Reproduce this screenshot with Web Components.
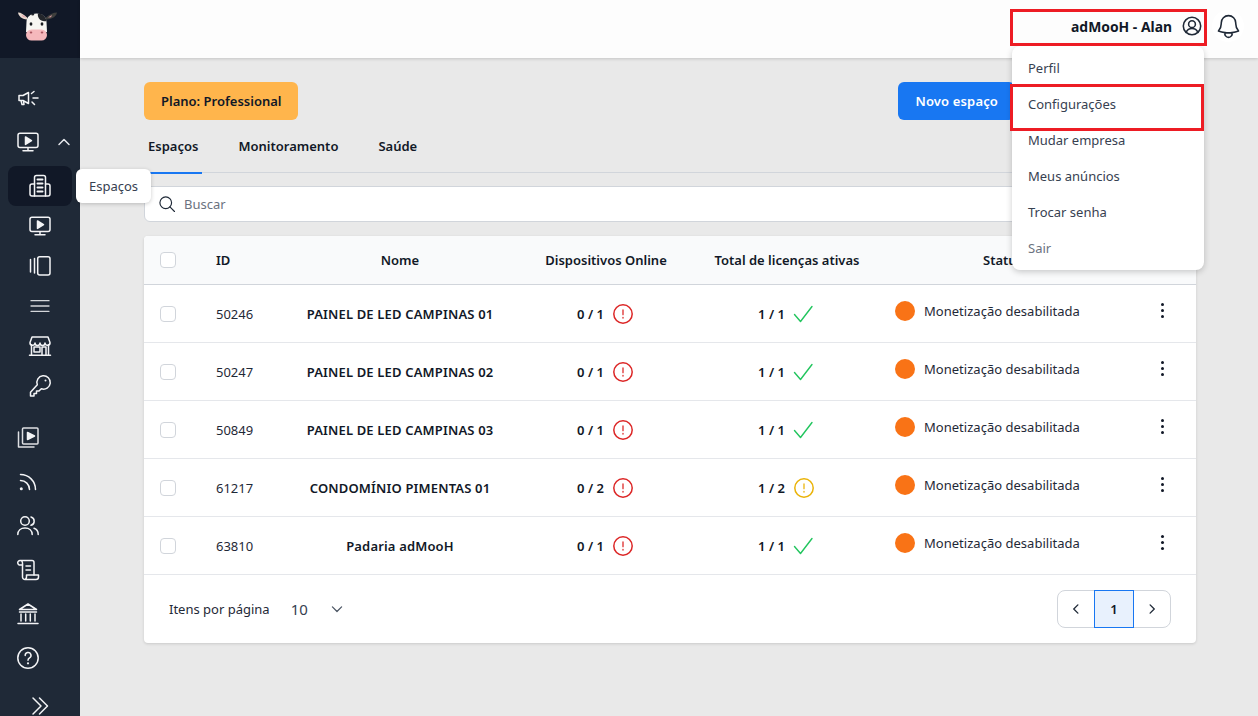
<!DOCTYPE html>
<html lang="pt-BR">
<head>
	<meta charset="UTF-8">
	<title>Espaços</title>
	<style>
		html, body {
			margin: 0;
			height: 100%;
		}
		body {
			width: 1258px;
			height: 716px;
			overflow: hidden;
			position: relative;
			display: grid;
			grid-template-columns: 80px 1fr;
			grid-template-rows: 58px 1fr;
			background: #e9e9e9;
			color: #111827;
			font-family: "Noto Sans", "Open Sans", sans-serif;
		}
		side-bar { grid-row: 1 / 3; }
	</style>
</head>
<body>
	<side-bar>
		<nav-item icon="megaphone"></nav-item>
		<nav-item icon="monitor" expanded gap="4"></nav-item>
		<nav-item icon="building" sub active gap="4"></nav-item>
		<nav-item icon="monitor" sub></nav-item>
		<nav-item icon="carousel" sub></nav-item>
		<nav-item icon="lines" sub></nav-item>
		<nav-item icon="store" sub></nav-item>
		<nav-item icon="key" sub></nav-item>
		<nav-item icon="library" gap="11"></nav-item>
		<nav-item icon="rss" gap="5"></nav-item>
		<nav-item icon="users" gap="4"></nav-item>
		<nav-item icon="scroll" gap="4"></nav-item>
		<nav-item icon="bank" gap="4"></nav-item>
		<nav-item icon="help" gap="4"></nav-item>
		<nav-item icon="collapse" sub gap="8"></nav-item>
	</side-bar>

	<top-bar>adMooH - Alan</top-bar>

	<page-content>
		<tool-bar>
			<app-button slot="left" kind="plan">Plano: Professional</app-button>
			<app-button slot="right" kind="primary">Novo espaço</app-button>
		</tool-bar>
		<tab-bar>
			<tab-item active>Espaços</tab-item>
			<tab-item>Monitoramento</tab-item>
			<tab-item>Saúde</tab-item>
		</tab-bar>
		<search-box>Buscar</search-box>
		<spaces-table>
			<space-row uid="50246" name="PAINEL DE LED CAMPINAS 01" online="0 / 1" licenses="1 / 1" state="ok"></space-row>
			<space-row uid="50247" name="PAINEL DE LED CAMPINAS 02" online="0 / 1" licenses="1 / 1" state="ok"></space-row>
			<space-row uid="50849" name="PAINEL DE LED CAMPINAS 03" online="0 / 1" licenses="1 / 1" state="ok"></space-row>
			<space-row uid="61217" name="CONDOMÍNIO PIMENTAS 01" online="0 / 2" licenses="1 / 2" state="warn"></space-row>
			<space-row uid="63810" name="Padaria adMooH" online="0 / 1" licenses="1 / 1" state="ok"></space-row>
		</spaces-table>
	</page-content>

	<nav-tooltip>Espaços</nav-tooltip>

	<user-menu>
		<menu-entry>Perfil</menu-entry>
		<menu-entry>Configurações</menu-entry>
		<menu-entry>Mudar empresa</menu-entry>
		<menu-entry>Meus anúncios</menu-entry>
		<menu-entry>Trocar senha</menu-entry>
		<menu-entry muted>Sair</menu-entry>
	</user-menu>

	<!-- Recuadros rojos de la captura, van encima de todo -->
	<mark-box style="left:1010px;top:9px;width:197px;height:37px"></mark-box>
	<mark-box style="left:1010px;top:84px;width:194px;height:47px"></mark-box>

	<script>
		// Todos los iconos comparten viewBox de 24x24
		const ICONS = {
			megaphone: '<path d="M3 9.5h4l5.5-3v11L7 14.5H3zM5 14.5l1 4h2l-.5-3.6"/><path d="M15.5 7.5l2.5-2M17 12h5M16 16l2.5 2.5"/>',
			monitor: '<rect x="2" y="3.2" width="20" height="14.3" rx="2"/><path d="M9.5 7l6 3.7-6 3.7z" fill="currentColor"/><path d="M12 18v2.7M7 20.8h10"/>',
			building: '<path d="M6.5 22V3.5a2 2 0 0 1 2-2h7a2 2 0 0 1 2 2V22"/><path d="M6.5 10H4a2 2 0 0 0-2 2v8a2 2 0 0 0 2 2h16a2 2 0 0 0 2-2v-8a2 2 0 0 0-2-2h-2.5"/><path d="M9.5 5.5h5M9.5 9.5h5M9.5 13.5h5M9.5 17.5h5" stroke-width="2"/>',
			carousel: '<rect x="9.7" y="2.7" width="12.3" height="18.3" rx="2"/><path d="M2.5 5.5V18M6.5 4.5V19"/>',
			lines: '<path d="M3 6.7h18M3 12h18M3 17.3h18" stroke-width="1.3" opacity=".85"/>',
			store: '<path d="M4 3h16l2 5.5a2.5 2.5 0 0 1-5 .5 2.5 2.5 0 0 1-5 0 2.5 2.5 0 0 1-5 0 2.5 2.5 0 0 1-5-.5z"/><path d="M3.5 11v10M20.5 11v10M1.5 21.2h21"/><rect x="6" y="13" width="6" height="5"/><path d="M14 21v-8h4v8"/>',
			key: '<path d="M9.3 10.7A6.7 6.7 0 1 1 13.3 14.7L11 17H8.5v2.5H6V22H2.5v-3.7z"/><path d="M17.5 6.5h.01" stroke-width="2"/>',
			library: '<rect x="6.5" y="3" width="15.5" height="16" rx="1" opacity=".9"/><path d="M11.5 7.5l7 3.5-7 3.5z" fill="currentColor"/><path d="M2.5 7v15H18" opacity=".9"/>',
			rss: '<path d="M4.5 4.5a15 15 0 0 1 15 15M4.5 10.5a9 9 0 0 1 9 9"/><circle cx="5.3" cy="18.7" r="1.5" fill="currentColor" stroke="none"/>',
			users: '<circle cx="9" cy="7" r="4.3"/><path d="M1.8 20.5c0-4 3-6.5 7.2-6.5s7.2 2.5 7.2 6.5M15 3a4.3 4.3 0 0 1 0 8.3M18 14.2c2.6.8 4.2 3 4.2 6.3"/>',
			scroll: '<path d="M18 17V4.5a2 2 0 0 0-2-2H4a2.3 2.3 0 0 0-2.3 2.3c0 1 .6 1.7 1.3 2.2h3.5"/><path d="M5.2 2.7c.8.4 1.3 1.2 1.3 2.2V19A2.5 2.5 0 0 0 9 21.5h11a2.5 2.5 0 0 0 2.5-2.5v-2H10.5v2A2.5 2.5 0 0 1 9 21.4"/><path d="M10 8h4.5M10 12h4.5"/>',
			bank: '<path d="M12 2L3.5 7.5h17z"/><path d="M3.5 10h17M5 12v7M9.7 12v7M14.3 12v7M19 12v7M2 21.5h20"/>',
			help: '<circle cx="12" cy="12" r="10.2"/><path d="M9.2 9.5a2.9 2.9 0 1 1 4.4 2.4c-1 .6-1.6 1.1-1.6 2.3"/><circle cx="12" cy="17.3" r="1.1" fill="currentColor" stroke="none"/>',
			collapse: '<path d="M5 4l8 8-8 8M11.5 4l8 8-8 8"/>',
			up: '<path d="M7 14.5l5-5 5 5"/>',
			down: '<path d="M6.5 9.5L12 15l5.5-5.5"/>',
			left: '<path d="M14.5 6.5L9 12l5.5 5.5"/>',
			right: '<path d="M9.5 6.5L15 12l-5.5 5.5"/>',
			search: '<circle cx="10.5" cy="10.5" r="7"/><path d="M15.5 15.5L21 21"/>',
			user: '<circle cx="12" cy="12" r="9.5"/><circle cx="12" cy="10" r="3.7"/><path d="M5.5 19c1.2-2.7 3.5-4.2 6.5-4.2s5.3 1.5 6.5 4.2"/>',
			bell: '<path d="M14.857 17.082a23.848 23.848 0 0 0 5.454-1.31A8.967 8.967 0 0 1 18 9.75V9A6 6 0 0 0 6 9v.75a8.967 8.967 0 0 1-2.312 6.022c1.733.64 3.56 1.085 5.455 1.31m5.714 0a24.255 24.255 0 0 1-5.714 0m5.714 0a3 3 0 1 1-5.714 0"/>',
			alert: '<circle cx="12" cy="12" r="9.2"/><path d="M12 8v4.500" stroke-width="1.7" opacity=".75"/><circle cx="12" cy="15.800" r=".95" fill="currentColor" stroke="none" opacity=".75"/>',
			check: '<path d="M2.5 12.5l6 7L20 4.5"/>'
		};

		function icon(name, size, width) {
			return `<svg width="${size}" height="${size}" viewBox="0 0 24 24" fill="none" stroke="currentColor" stroke-width="${width || 1.5}" stroke-linecap="round" stroke-linejoin="round" aria-hidden="true">${ICONS[name]}</svg>`;
		}

		// Clase base: cada componente solo declara su HTML y sus estilos
		class Base extends HTMLElement {
			constructor() {
				super();
				this.attachShadow({mode: 'open'});
			}
			connectedCallback() {
				this.shadowRoot.innerHTML = this.render();
			}
		}

		class SideBar extends Base {
			render() {
				return `<style>
					:host { display: flex; flex-direction: column; height: 716px; overflow: hidden; background: #1f2937; }
					.logo { height: 58px; flex: none; display: flex; align-items: center; justify-content: center; padding: 0 6px 6px 0; box-sizing: border-box; background: #111827; }
					nav { display: flex; flex-direction: column; padding: 20px 8px 0; }
				</style>
				<div class="logo">
					<svg width="42" height="32" viewBox="0 0 42 32">
						<path d="M11 7.5C8 4.500 5 2.500 2 2.500c.5 3.500 3.500 6.500 9 7z" fill="#e9d9cf"/><path d="M5.500 4.500l5 3-3.500-.5z" fill="#e9a3ab"/>
						<path d="M30 7.5c3-3 7-5 11-5-.5 3.500-4 6.500-11 7z" fill="#3f3f3d"/><path d="M36 5l-4 2.500 3-.3z" fill="#d99aa1"/>
						<path d="M10.500 12c0-5 4-8.500 10-8.500s10 3.500 10 8.500l.5 10H10z" fill="#f7f6f2"/>
						<path d="M22 3.600c4.500.2 7.800 3 8.500 7.400-3 .6-6-.2-7.500-2.500-1-1.500-1.500-3.200-1-4.900zM14.500 4.800c1-.6 2.500-1 3.800-1.100-.1 1.500-1.200 2.500-3.800 1.100z" fill="#23262b"/>
						<ellipse cx="15" cy="14" rx="1.400" ry="1.800" fill="#1a1c20"/><ellipse cx="26" cy="14" rx="1.400" ry="1.800" fill="#1a1c20"/>
						<rect x="10" y="19.500" width="21" height="11" rx="5.500" fill="#f5b8bc"/>
						<ellipse cx="15" cy="22.500" rx="1.300" ry=".9" fill="#a9545f"/><ellipse cx="26" cy="22.500" rx="1.300" ry=".9" fill="#a9545f"/>
					</svg>
				</div>
				<nav><slot></slot></nav>`;
			}
		}

		class NavItem extends Base {
			render() {
				const sub = this.hasAttribute('sub');
				const chevron = this.hasAttribute('expanded') ? `<span class="chev">${icon('up', 24, 1.5)}</span>` : '';
				return `<style>
					:host { display: flex; align-items: center; height: 40px; flex: none; border-radius: 8px; color: #f3f4f6; margin-top: ${this.getAttribute('gap') || 0}px;
						justify-content: ${sub ? 'center' : 'flex-start'}; padding-left: ${sub ? 0 : 8}px; position: relative;
						background: ${this.hasAttribute('active') ? '#111827' : 'transparent'}; }
					svg { display: block; flex: none; }
					.chev { flex: none; margin-left: 12px; color: #e5e7eb; }
				</style>${icon(this.getAttribute('icon'), 24)}${chevron}`;
			}
		}

		class TopBar extends Base {
			render() {
				return `<style>
					:host { display: flex; align-items: center; justify-content: flex-end; height: 58px; box-sizing: border-box; padding: 0 14px 6px 0; background: #fdfdfd; box-shadow: 0 1px 3px rgba(0,0,0,.16); position: relative; z-index: 2; }
					.name { font-size: 13.9px; font-weight: 700; color: #111827; }
					.user { display: flex; margin-left: 9px; color: #1f2937; }
					.bell { display: flex; align-items: center; justify-content: center; width: 32px; height: 32px; margin-left: 9px; border-radius: 50%; background: #fff; color: #1f2937; }
				</style>
				<span class="name"><slot></slot></span>
				<span class="user">${icon('user', 22, 1.7)}</span>
				<span class="bell">${icon('bell', 29, 1.3)}</span>`;
			}
		}

		class PageContent extends Base {
			render() {
				return `<style>
					:host { display: flex; flex-direction: column; padding: 24px 62px 0 64px; min-width: 0; }
				</style><slot></slot>`;
			}
		}

		class ToolBar extends Base {
			render() {
				return `<style>
					:host { display: flex; justify-content: space-between; height: 38px; padding-right: 181px; }
				</style><slot name="left"></slot><slot name="right"></slot>`;
			}
		}

		class AppButton extends Base {
			render() {
				const plan = this.getAttribute('kind') === 'plan';
				return `<style>
					:host { display: flex; align-items: center; height: 38px; padding: 0 17px; box-sizing: border-box; border-radius: 6px; font-size: 13px; font-weight: 600; white-space: nowrap;
						letter-spacing: ${plan ? 0 : '.15px'};
						background: ${plan ? '#ffb54c' : '#1877f2'}; color: ${plan ? '#111827' : '#fff'}; }
				</style><slot></slot>`;
			}
		}

		class TabBar extends Base {
			render() {
				return `<style>
					:host { display: flex; gap: 32px; height: 53px; box-sizing: border-box; border-bottom: 1px solid #d1d5db; }
				</style><slot></slot>`;
			}
		}

		class TabItem extends Base {
			render() {
				const active = this.hasAttribute('active');
				return `<style>
					:host { display: flex; align-items: center; height: 54px; box-sizing: border-box; padding: 0 4px 1px; font-size: 13px; font-weight: 600; color: #111827;
						border-bottom: 2px solid ${active ? '#1877f2' : 'transparent'}; }
				</style><slot></slot>`;
			}
		}

		class SearchBox extends Base {
			render() {
				return `<style>
					:host { display: flex; align-items: center; gap: 7px; height: 36px; margin-top: 13px; padding-left: 12px; box-sizing: border-box; background: #fff; border: 1px solid #d1d5db; border-radius: 6px; font-size: 13px; color: #6b7280; }
					svg { display: block; color: #1f2937; }
				</style>${icon('search', 20, 1.4)}<slot></slot>`;
			}
		}

		const COLUMNS = '48px 88px 240px 172px 190px 246px 68px';

		class SpacesTable extends Base {
			render() {
				return `<style>
					:host { display: block; margin-top: 14px; background: #fff; border-radius: 4px; box-shadow: 0 1px 3px rgba(0,0,0,.14); overflow: hidden; }
					.head { display: grid; grid-template-columns: ${COLUMNS}; align-items: center; height: 49px; box-sizing: border-box; background: #f9fafb; border-bottom: 1px solid #d1d5db; font-size: 13px; font-weight: 600; color: #111827; text-align: center; }
					.box { width: 16px; height: 16px; box-sizing: border-box; border: 1px solid #d1d5db; border-radius: 4px; background: #fff; margin-left: 16px; }
					.id { text-align: left; padding-left: 24px; }
					.status { padding-right: 4px; }
					.foot { display: flex; align-items: center; height: 68px; padding: 0 25px; font-size: 13px; color: #1f2937; }
					.size { margin-left: 21px; font-size: 15px; color: #374151; }
					.down { display: flex; margin-left: 19px; color: #4b5563; }
					.pager { display: flex; margin-left: auto; height: 38px; border: 1px solid #d1d5db; border-radius: 8px; box-sizing: border-box; color: #1f2937; }
					.pager span { display: flex; align-items: center; justify-content: center; width: 36px; }
					.pager .page { width: 40px; margin: -1px 0; background: #e8f1fd; border: 1px solid #1877f2; box-sizing: border-box; font-weight: 600; font-size: 13px; color: #111827; }
				</style>
				<div class="head">
					<div class="box"></div>
					<div class="id">ID</div>
					<div>Nome</div>
					<div>Dispositivos Online</div>
					<div>Total de licenças ativas</div>
					<div class="status">Status</div>
					<div></div>
				</div>
				<slot></slot>
				<div class="foot">
					<span>Itens por página</span>
					<span class="size">10</span>
					<span class="down">${icon('down', 20, 1.5)}</span>
					<div class="pager">
						<span>${icon('left', 18, 1.8)}</span>
						<span class="page">1</span>
						<span>${icon('right', 18, 1.8)}</span>
					</div>
				</div>`;
			}
		}

		class SpaceRow extends Base {
			render() {
				const a = n => this.getAttribute(n);
				const warn = a('state') === 'warn';
				const mark = warn
					? `<span class="warn">${icon('alert', 24, 1.5)}</span>`
					: `<span class="ok">${icon('check', 24, 1.4)}</span>`;
				return `<style>
					:host { display: grid; grid-template-columns: ${COLUMNS}; align-items: center; height: 58px; box-sizing: border-box; border-bottom: 1px solid #e5e7eb; font-size: 13px; color: #111827; }
					.box { width: 16px; height: 16px; box-sizing: border-box; border: 1px solid #d1d5db; border-radius: 4px; margin-left: 16px; }
					.id { padding-left: 24px; color: #1f2937; }
					.name { text-align: center; font-weight: 600; white-space: nowrap; letter-spacing: .16px; }
					.count { display: flex; align-items: center; justify-content: center; gap: 7px; font-weight: 600; }
					svg { display: block; }
					.count span { display: flex; }
					.bad { color: #dc2626; }
					.warn { color: #eab308; }
					.ok { color: #22c55e; }
					.status { display: flex; align-items: center; gap: 9px; padding: 0 0 6px 13px; color: #1f2937; white-space: nowrap; letter-spacing: .02px; }
					.dot { width: 20px; height: 20px; border-radius: 50%; background: #f97316; }
					.more { display: flex; flex-direction: column; align-items: center; gap: 3px; padding-bottom: 6px; }
					.more i { width: 3px; height: 3px; border-radius: 50%; background: #111827; }
				</style>
				<div class="box"></div>
				<div class="id">${a('uid')}</div>
				<div class="name">${a('name')}</div>
				<div class="count">${a('online')} <span class="bad">${icon('alert', 24, 1.5)}</span></div>
				<div class="count">${a('licenses')} ${mark}</div>
				<div class="status"><span class="dot"></span>Monetização desabilitada</div>
				<div class="more"><i></i><i></i><i></i></div>`;
			}
		}

		class NavTooltip extends Base {
			render() {
				return `<style>
					:host { position: absolute; left: 76px; top: 169px; display: flex; align-items: center; height: 34px; padding: 0 13px; background: #fff; border-radius: 6px; box-shadow: 0 1px 4px rgba(0,0,0,.2); font-size: 13px; color: #374151; z-index: 5; }
				</style><slot></slot>`;
			}
		}

		class UserMenu extends Base {
			render() {
				return `<style>
					:host { position: absolute; left: 1012px; top: 46px; width: 192px; box-sizing: border-box; padding: 4px 0; background: #fff; border-radius: 8px; box-shadow: 0 2px 6px rgba(0,0,0,.2); z-index: 5; }
				</style><slot></slot>`;
			}
		}

		class MenuEntry extends Base {
			render() {
				return `<style>
					:host { display: flex; align-items: center; height: 36px; padding-left: 16px; font-size: 13px; color: ${this.hasAttribute('muted') ? '#6b7280' : '#374151'}; }
				</style><slot></slot>`;
			}
		}

		class MarkBox extends Base {
			render() {
				return `<style>
					:host { position: absolute; box-sizing: border-box; border: 3.5px solid #ed1c24; z-index: 6; }
				</style>`;
			}
		}

		customElements.define('side-bar', SideBar);
		customElements.define('nav-item', NavItem);
		customElements.define('top-bar', TopBar);
		customElements.define('page-content', PageContent);
		customElements.define('tool-bar', ToolBar);
		customElements.define('app-button', AppButton);
		customElements.define('tab-bar', TabBar);
		customElements.define('tab-item', TabItem);
		customElements.define('search-box', SearchBox);
		customElements.define('spaces-table', SpacesTable);
		customElements.define('space-row', SpaceRow);
		customElements.define('nav-tooltip', NavTooltip);
		customElements.define('user-menu', UserMenu);
		customElements.define('menu-entry', MenuEntry);
		customElements.define('mark-box', MarkBox);
	</script>
</body>
</html>
